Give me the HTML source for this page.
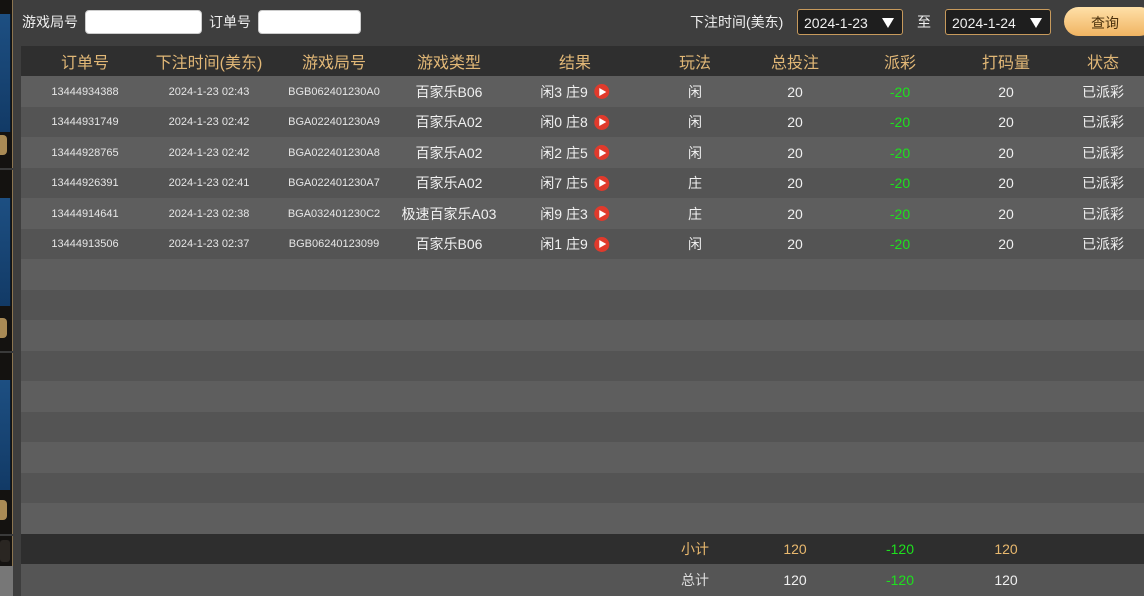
<!DOCTYPE html>
<html><head><meta charset="utf-8"><style>
*{margin:0;padding:0;box-sizing:border-box}
body{width:1144px;height:596px;overflow:hidden;background:#3e3e3e;font-family:"Liberation Sans","Noto Sans CJK SC",sans-serif;color:#f0f0f0;position:relative}
.strip{position:absolute;left:0;top:0;width:13px;height:596px;background:#141210;border-right:1px solid #8a7450}
.blue{position:absolute;left:0;width:11px;background:linear-gradient(#1d4f82,#123a66);border-right:1px solid #0a1a2a}
.tan{position:absolute;left:0;width:7px;height:20px;background:#a98a55;border-radius:0 4px 4px 0}
.sep{position:absolute;left:0;width:13px;height:2px;background:#3a3a3a}
.lbl{position:absolute;font-size:14px;color:#f0f0f0;top:12px}
.inp{position:absolute;top:10px;height:24px;background:#fff;border-radius:4px;border:1px solid #ccc}
.sel{position:absolute;top:9px;width:106px;height:26px;background:#1e1e1e;border:1px solid #c79a5c;border-radius:3px;font-size:14px;padding:5px 0 0 6px}
.sel:after{content:"";position:absolute;right:8px;top:8px;border-left:6px solid transparent;border-right:6px solid transparent;border-top:10px solid #fff}
.btn{position:absolute;left:1064px;top:7px;width:90px;height:29px;border-radius:15px;background:linear-gradient(#ffe0a8,#f0b462);color:#4a300c;font-size:14px;padding:6px 0 0 27px}
.row{position:absolute;left:21px;width:1123px;height:31px}
.c{position:absolute;top:0;height:100%;display:flex;align-items:center;justify-content:center;transform:translateX(-50%);white-space:nowrap;font-size:14px}
.hd .c{color:#e2b877;font-size:16px}
.s{font-size:11px;color:#e6e6e6}
.g{color:#1ee01e}
.o{color:#e8b86e}
.play{display:inline-block;width:15px;height:15px;border-radius:50%;background:#e03a2c;margin-left:7px;position:relative}
.play:after{content:"";position:absolute;left:5px;top:3.5px;border-top:4px solid transparent;border-bottom:4px solid transparent;border-left:7px solid #fff}
</style></head><body>
<div class="strip">
<div class="blue" style="top:14px;height:118px"></div><div class="tan" style="top:135px"></div><div class="sep" style="top:168px"></div>
<div class="blue" style="top:198px;height:108px"></div><div class="tan" style="top:318px"></div><div class="sep" style="top:351px"></div>
<div class="blue" style="top:380px;height:110px"></div><div class="tan" style="top:500px"></div><div class="sep" style="top:534px"></div>
<div style="position:absolute;top:540px;left:0;width:10px;height:22px;background:#2a2622;border-radius:3px"></div>
<div style="position:absolute;top:566px;left:0;width:13px;height:30px;background:#777"></div>
</div>
<div class="lbl" style="left:22px">游戏局号</div>
<div class="inp" style="left:85px;width:117px"></div>
<div class="lbl" style="left:209px">订单号</div>
<div class="inp" style="left:258px;width:103px"></div>
<div class="lbl" style="left:690px">下注时间(美东)</div>
<div class="sel" style="left:797px">2024-1-23</div>
<div class="lbl" style="left:917px">至</div>
<div class="sel" style="left:945px">2024-1-24</div>
<div class="btn">查询</div>

<div class="row hd" style="top:46px;height:30px;background:#2f2f2f">
<div class="c" style="left:64px">订单号</div><div class="c" style="left:188px">下注时间(美东)</div><div class="c" style="left:313px">游戏局号</div><div class="c" style="left:428px">游戏类型</div><div class="c" style="left:554px">结果</div><div class="c" style="left:674px">玩法</div><div class="c" style="left:774px">总投注</div><div class="c" style="left:879px">派彩</div><div class="c" style="left:985px">打码量</div><div class="c" style="left:1082px">状态</div>
</div>

<div id="rows"></div>
<script>
var d=[["13444934388","2024-1-23 02:43","BGB062401230A0","百家乐B06","闲3 庄9","闲"],
["13444931749","2024-1-23 02:42","BGA022401230A9","百家乐A02","闲0 庄8","闲"],
["13444928765","2024-1-23 02:42","BGA022401230A8","百家乐A02","闲2 庄5","闲"],
["13444926391","2024-1-23 02:41","BGA022401230A7","百家乐A02","闲7 庄5","庄"],
["13444914641","2024-1-23 02:38","BGA032401230C2","极速百家乐A03","闲9 庄3","庄"],
["13444913506","2024-1-23 02:37","BGB06240123099","百家乐B06","闲1 庄9","闲"]];
var h="";
for(var i=0;i<15;i++){var t=76+i*30.53;var bg=i%2==0?"#5e5e5e":"#545454";
h+='<div class="row" style="top:'+t+'px;height:31px;background:'+bg+'">';
if(i<6){var r=d[i];h+='<div class="c s" style="left:64px">'+r[0]+'</div><div class="c s" style="left:188px">'+r[1]+'</div><div class="c s" style="left:313px">'+r[2]+'</div><div class="c" style="left:428px">'+r[3]+'</div><div class="c" style="left:554px">'+r[4]+'<span class="play"></span></div><div class="c" style="left:674px">'+r[5]+'</div><div class="c" style="left:774px">20</div><div class="c g" style="left:879px">-20</div><div class="c" style="left:985px">20</div><div class="c" style="left:1082px">已派彩</div>';}
h+='</div>';}
h+='<div class="row" style="top:534px;height:30px;background:#2e2e2e"><div class="c o" style="left:674px">小计</div><div class="c o" style="left:774px">120</div><div class="c g" style="left:879px">-120</div><div class="c o" style="left:985px">120</div></div>';
h+='<div class="row" style="top:564px;height:32px;background:#555"><div class="c" style="left:674px;color:#ddd">总计</div><div class="c" style="left:774px">120</div><div class="c g" style="left:879px">-120</div><div class="c" style="left:985px">120</div></div>';
document.getElementById("rows").innerHTML=h;
</script>
</body></html>
